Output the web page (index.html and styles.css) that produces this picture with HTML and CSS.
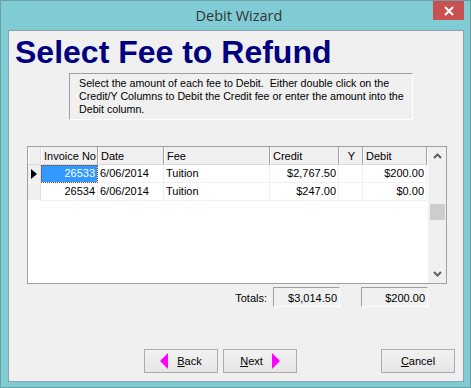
FILE: index.html
```html
<!DOCTYPE html>
<html>
<head>
  <title>Debit Wizard</title>
  <link rel="stylesheet" href="styles.css">
</head>
<body>

<div class="window">
  <div class="titlebar">
    <span></span>
    <span class="title">Debit Wizard</span>
    <div class="close">
      <svg width="10" height="10" viewBox="0 0 10 10"><path d="M1 1 L9 9 M9 1 L1 9" stroke="#fff" stroke-width="2"/></svg>
    </div>
  </div>

  <div class="client">
    <h1>Select Fee to Refund</h1>

    <p class="note">Select the amount of each fee to Debit.&nbsp; Either double click on the Credit/Y Columns to Debit the Credit fee or enter the amount into the Debit column.</p>

    <div class="grid">
      <div class="grid-body">
        <div class="row head">
          <div class="cell ind"></div>
          <div class="cell">Invoice No</div>
          <div class="cell">Date</div>
          <div class="cell">Fee</div>
          <div class="cell">Credit</div>
          <div class="cell center">Y</div>
          <div class="cell">Debit</div>
        </div>
        <div class="row">
          <div class="cell ind"><span class="pointer"></span></div>
          <div class="cell num selected">26533</div>
          <div class="cell">6/06/2014</div>
          <div class="cell">Tuition</div>
          <div class="cell num">$2,767.50</div>
          <div class="cell"></div>
          <div class="cell num">$200.00</div>
        </div>
        <div class="row">
          <div class="cell ind"></div>
          <div class="cell num">26534</div>
          <div class="cell">6/06/2014</div>
          <div class="cell">Tuition</div>
          <div class="cell num">$247.00</div>
          <div class="cell"></div>
          <div class="cell num">$0.00</div>
        </div>
      </div>
      <div class="vscroll">
        <svg class="arrow" width="9" height="6" viewBox="0 0 9 6"><path d="M1 5 L4.5 1.5 L8 5" fill="none" stroke="#606060" stroke-width="2"/></svg>
        <div class="thumb"></div>
        <svg class="arrow down" width="9" height="6" viewBox="0 0 9 6"><path d="M1 1 L4.5 4.5 L8 1" fill="none" stroke="#606060" stroke-width="2"/></svg>
      </div>
    </div>

    <div class="totals">
      <span class="label">Totals:</span>
      <div class="box">$3,014.50</div>
      <div class="box">$200.00</div>
    </div>

    <div class="buttons">
      <button class="btn"><span class="tri left"></span><span><u>B</u>ack</span></button>
      <button class="btn"><span><u>N</u>ext</span><span class="tri right"></span></button>
      <button class="btn cancel"><span><u>C</u>ancel</span></button>
    </div>
  </div>
</div>

</body>
</html>
```

FILE: styles.css
```css
body {
  margin: 0;
  padding: 0;
  font-family: "Liberation Sans", Arial, sans-serif;
  font-size: 11px;
  color: #000;
}
.window {
  width: 471px;
  height: 388px;
  box-sizing: border-box;
  background-color: #80ccd4;
  border: 1px solid #6f9ea5;
  padding: 0 6px 5px 7px;
  display: flex;
  flex-direction: column;
}
.titlebar {
  height: 29px;
  display: grid;
  grid-template-columns: 1fr auto 1fr;
  align-items: start;
  margin-right: -6px;
}
.titlebar .title {
  font-family: "Open Sans", "Liberation Sans", sans-serif;
  font-size: 14.5px;
  color: #333;
  line-height: 29px;
  padding-left: 0;
}
.titlebar .close {
  justify-self: end;
  margin-right: 6px;
  width: 31px;
  height: 19px;
  background-color: #c75050;
  display: flex;
  align-items: center;
  justify-content: center;
}
.client {
  flex: 1;
  background-color: #f0f0f0;
  border: 1px solid #8aa4a8;
  display: flex;
  flex-direction: column;
}
h1 {
  margin: 6px 0 0 6px;
  font-family: "Liberation Sans", Arial, sans-serif;
  font-weight: 700;
  font-size: 32px;
  line-height: 30px;
  color: #000080;
}
.note {
  margin: 6px 0 0 60px;
  width: 344px;
  height: 47px;
  box-sizing: border-box;
  padding: 3px 4px 0 9px;
  font-size: 10.7px;
  line-height: 13px;
  border: 1px solid #fff;
  border-top-color: #a0a0a0;
  border-left-color: #a0a0a0;
}
.grid {
  margin: 26px 0 0 18px;
  width: 420px;
  height: 138px;
  box-sizing: border-box;
  border: 1px solid #a0a0a0;
  background: #fff;
  display: flex;
}
.grid-body {
  flex: 1;
}
.row {
  display: grid;
  grid-template-columns: 13px 57px 66px 106px 69px 24px 64px;
  height: 18px;
}
.cell {
  box-sizing: border-box;
  border-right: 1px solid #f0f0f0;
  border-bottom: 1px solid #f0f0f0;
  padding: 0 2px;
  line-height: 17px;
  white-space: nowrap;
  overflow: hidden;
}
.cell.num {
  text-align: right;
}
.cell.center {
  text-align: center;
}
.cell.ind {
  background-color: #f0f0f0;
  border-right: 1px solid #e0e0e0;
  border-bottom: 1px solid #fff;
  display: flex;
  align-items: center;
  padding: 0 0 0 3px;
}
.head .cell {
  background-color: #f0f0f0;
  border-left: 1px solid #fff;
  border-right: 1px solid #a0a0a0;
  border-bottom: 1px solid #d8d8d8;
  height: 18px;
  padding: 1px 1px 0 2px;
  line-height: 16px;
}
.head .cell.ind {
  border-right: 1px solid #e0e0e0;
}
.pointer {
  width: 0;
  height: 0;
  border-top: 5px solid transparent;
  border-bottom: 5px solid transparent;
  border-left: 6px solid #000;
}
.cell.selected {
  background-color: #3399ff;
  color: #fff;
  outline: 1px dotted #7a4a20;
  outline-offset: -1px;
}
.vscroll {
  width: 18px;
  background-color: #f0f0f0;
  display: flex;
  flex-direction: column;
  align-items: center;
}
.vscroll .arrow {
  margin-top: 6px;
}
.vscroll .thumb {
  margin-top: 45px;
  width: 15px;
  height: 16px;
  background-color: #cdcdcd;
}
.vscroll .arrow.down {
  margin-top: auto;
  margin-bottom: 6px;
}
.totals {
  margin: 3px 35px 0 0;
  display: flex;
  justify-content: flex-end;
  align-items: center;
  height: 20px;
}
.totals .label {
  margin-right: 6px;
  padding-top: 2px;
}
.totals .box {
  width: 67px;
  height: 20px;
  box-sizing: border-box;
  border: 1px solid #fff;
  border-top-color: #a0a0a0;
  border-left-color: #a0a0a0;
  text-align: right;
  padding: 2px 2px 0 0;
  line-height: 16px;
}
.totals .box + .box {
  margin-left: 21px;
}
.buttons {
  margin: 42px 8px 0 135px;
  display: flex;
  gap: 5px;
}
.btn {
  width: 74px;
  height: 24px;
  border: 1px solid #adadad;
  background: linear-gradient(#f2f2f2, #e6e6e6);
  font-family: "Liberation Sans", Arial, sans-serif;
  font-size: 11px;
  color: #000;
  padding: 0;
  display: flex;
  align-items: center;
  justify-content: center;
  gap: 9px;
}
.btn.cancel {
  margin-left: auto;
}
.tri {
  width: 0;
  height: 0;
  border-top: 8px solid transparent;
  border-bottom: 8px solid transparent;
}
.tri.left {
  border-right: 8px solid #ff00ff;
}
.tri.right {
  border-left: 8px solid #ff00ff;
}
```
